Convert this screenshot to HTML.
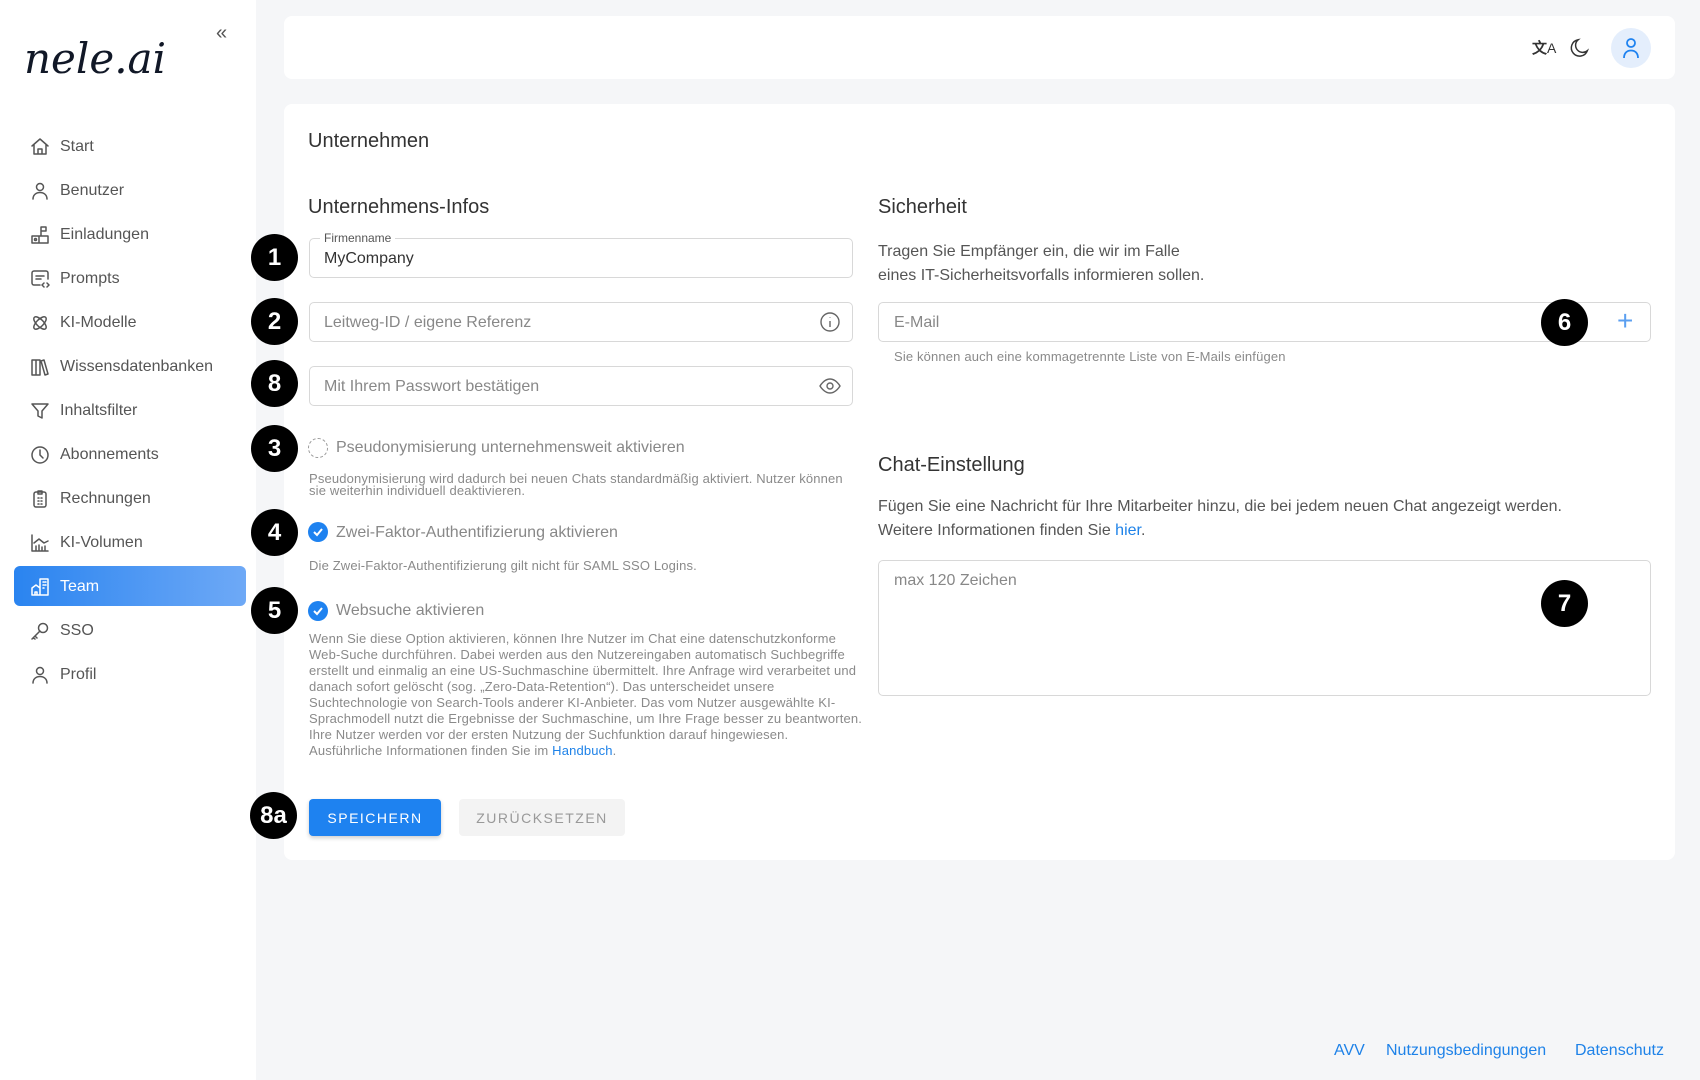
<!DOCTYPE html>
<html><head><meta charset="utf-8"><style>
*{box-sizing:border-box;margin:0;padding:0}
body{width:1700px;height:1080px;background:#f5f6f8;font-family:"Liberation Sans",sans-serif;color:#333;position:relative;overflow:hidden}
.a{position:absolute}
.side{left:0;top:0;width:256px;height:1080px;background:#fff}
.nav{left:14px;width:232px;height:40px;border-radius:6px;display:flex;align-items:center;font-size:16px;color:#555}
.nav svg{position:absolute;left:16px;top:11px;width:20px;height:20px;fill:none;stroke:#555;stroke-width:1.5;stroke-linecap:round;stroke-linejoin:round}
.nav span{position:absolute;left:46px;top:12px}
.card{background:#fff;border-radius:8px}
.badge{width:47px;height:47px;border-radius:50%;background:#000;color:#fff;font-size:24px;font-weight:bold;display:flex;align-items:center;justify-content:center;margin-left:-23px;margin-top:-23px}
.field{border:1.5px solid #d8d8d8;border-radius:5px;background:#fff}
.ph{font-size:16px;color:#888}
.h2{font-size:20px;color:#333}
.desc{font-size:13px;letter-spacing:.15px;color:#8a8a8a;line-height:12px;white-space:nowrap}
.chk{width:20px;height:20px;border-radius:50%;background:#1e82f0;margin-top:-10px}
.chk svg{position:absolute;left:4px;top:5px}
.lbl{font-size:16px;color:#888;margin-top:-10px}
.lnk{color:#1e82e8}
</style></head><body>
<div class="a side"></div>
<div class="a" style="left:24px;top:34px;font-family:'DejaVu Serif',serif;font-style:italic;font-size:42px;color:#111827;letter-spacing:0px">nele.ai</div>
<div class="a" style="left:216px;top:22px;font-size:20px;color:#555">«</div>

<div class="a nav" style="top:126px"><svg viewBox="0 0 20 20"><path d="M2 9L10 2l8 7M4 8v9h12V8M8 17v-5h4v5"/></svg><span>Start</span></div>
<div class="a nav" style="top:170px"><svg viewBox="0 0 20 20"><circle cx="10" cy="6" r="3.5"/><path d="M3 18c0-4 3-6.5 7-6.5s7 2.5 7 6.5"/></svg><span>Benutzer</span></div>
<div class="a nav" style="top:214px"><svg viewBox="0 0 20 20"><path d="M2 18V11h7v7zM9 11h9v7H9M11 11V2h5v4h-5"/><circle cx="5.5" cy="14.5" r="1"/></svg><span>Einladungen</span></div>
<div class="a nav" style="top:258px"><svg viewBox="0 0 20 20"><path d="M10 16H4a2 2 0 0 1-2-2V4a2 2 0 0 1 2-2h12a2 2 0 0 1 2 2v6M6 7h8M6 10h5M14 14l-2 2 2 2M17 14l2 2-2 2"/></svg><span>Prompts</span></div>
<div class="a nav" style="top:302px"><svg viewBox="0 0 20 20"><ellipse cx="10" cy="10" rx="8" ry="3.5" transform="rotate(45 10 10)"/><ellipse cx="10" cy="10" rx="8" ry="3.5" transform="rotate(-45 10 10)"/></svg><span>KI-Modelle</span></div>
<div class="a nav" style="top:346px"><svg viewBox="0 0 20 20"><path d="M2 3h4v15H2zM6 3h4v15H6zM11 4l3-1 4 14-3 1z"/></svg><span>Wissensdatenbanken</span></div>
<div class="a nav" style="top:390px"><svg viewBox="0 0 20 20"><path d="M2 3h16l-6 7v7l-4-2v-5z"/></svg><span>Inhaltsfilter</span></div>
<div class="a nav" style="top:434px"><svg viewBox="0 0 20 20"><circle cx="10" cy="10" r="8"/><path d="M10 5v5l3 3"/></svg><span>Abonnements</span></div>
<div class="a nav" style="top:478px"><svg viewBox="0 0 20 20"><rect x="4" y="3" width="12" height="15" rx="2"/><path d="M8 2h4v3H8zM8 9h1M11 9h1M8 12h1M11 12h1M8 15h1M11 15h1"/></svg><span>Rechnungen</span></div>
<div class="a nav" style="top:522px"><svg viewBox="0 0 20 20"><path d="M2 2v16h16M4 10l5-4 5 4 4-2M6 17v-4M9 17v-5M12 17v-3M15 17v-4"/></svg><span>KI-Volumen</span></div>
<div class="a nav" style="top:566px;background:linear-gradient(90deg,#2a84f0,#6ea9f6);color:#fff"><svg viewBox="0 0 20 20" style="stroke:#fff"><path d="M2 18v-7l4-3 4 3v7zM10 18V2h8v16zM5 18v-3h2v3M13 5h1M13 8h1M13 11h1M15 5h1M15 8h1"/></svg><span>Team</span></div>
<div class="a nav" style="top:610px"><svg viewBox="0 0 20 20"><circle cx="13" cy="7" r="4.5"/><path d="M10 10l-8 8M5 15l2 2M3 17l2 1"/></svg><span>SSO</span></div>
<div class="a nav" style="top:654px"><svg viewBox="0 0 20 20"><circle cx="10" cy="6" r="3.5"/><path d="M3 18c0-4 3-6.5 7-6.5s7 2.5 7 6.5"/></svg><span>Profil</span></div>

<div class="a card" style="left:284px;top:16px;width:1391px;height:63px"></div>
<div class="a" style="left:1532px;top:37px;font-size:15px;color:#333;font-weight:bold">文<span style="font-size:14px;font-weight:normal">A</span></div>
<svg class="a" style="left:1569px;top:37px" width="22" height="22" viewBox="0 0 24 24" fill="none" stroke="#333" stroke-width="1.6"><path d="M20 15A9 9 0 1 1 10 3a7 7 0 0 0 10 12z"/></svg>
<div class="a" style="left:1611px;top:28px;width:40px;height:40px;border-radius:50%;background:#e4eefc"></div>
<svg class="a" style="left:1621px;top:37px" width="20" height="22" viewBox="0 0 20 22" fill="none" stroke="#1e82f0" stroke-width="1.8"><circle cx="10" cy="6" r="4"/><path d="M3 21c0-5 3-7.5 7-7.5s7 2.5 7 7.5"/></svg>

<div class="a card" style="left:284px;top:104px;width:1391px;height:756px"></div>
<div class="a h2" style="left:308px;top:130px">Unternehmen</div>
<div class="a h2" style="left:308px;top:196px">Unternehmens-Infos</div>

<div class="a field" style="left:309px;top:238px;width:544px;height:40px"></div>
<div class="a" style="left:320px;top:231px;font-size:12px;color:#555;background:#fff;padding:0 4px">Firmenname</div>
<div class="a" style="left:324px;top:250px;font-size:16px;color:#333">MyCompany</div>

<div class="a field" style="left:309px;top:302px;width:544px;height:40px"></div>
<div class="a ph" style="left:324px;top:314px">Leitweg-ID / eigene Referenz</div>
<svg class="a" style="left:819px;top:311px" width="22" height="22" viewBox="0 0 22 22" fill="none" stroke="#666" stroke-width="1.4"><circle cx="11" cy="11" r="9"/><path d="M11 10v6M11 6.5v.5"/></svg>

<div class="a field" style="left:309px;top:366px;width:544px;height:40px"></div>
<div class="a ph" style="left:324px;top:378px">Mit Ihrem Passwort bestätigen</div>
<svg class="a" style="left:819px;top:377px" width="22" height="18" viewBox="0 0 22 18" fill="none" stroke="#666" stroke-width="1.4"><path d="M1 9s4-7 10-7 10 7 10 7-4 7-10 7S1 9 1 9z"/><circle cx="11" cy="9" r="3"/></svg>

<div class="a" style="left:308px;top:438px;width:20px;height:20px;border-radius:50%;border:1.5px dashed #999"></div>
<div class="a lbl" style="left:336px;top:449px">Pseudonymisierung unternehmensweit aktivieren</div>
<div class="a desc" style="left:309px;top:473px">Pseudonymisierung wird dadurch bei neuen Chats standardmäßig aktiviert. Nutzer können<br>sie weiterhin individuell deaktivieren.</div>

<div class="a chk" style="left:308px;top:532px"><svg width="12" height="10" viewBox="0 0 12 10" fill="none" stroke="#fff" stroke-width="2"><path d="M2 5l3 3 5-6"/></svg></div>
<div class="a lbl" style="left:336px;top:534px">Zwei-Faktor-Authentifizierung aktivieren</div>
<div class="a desc" style="left:309px;top:560px">Die Zwei-Faktor-Authentifizierung gilt nicht für SAML SSO Logins.</div>

<div class="a chk" style="left:308px;top:611px"><svg width="12" height="10" viewBox="0 0 12 10" fill="none" stroke="#fff" stroke-width="2"><path d="M2 5l3 3 5-6"/></svg></div>
<div class="a lbl" style="left:336px;top:612px">Websuche aktivieren</div>
<div class="a desc" style="left:309px;top:631px;line-height:16px">Wenn Sie diese Option aktivieren, können Ihre Nutzer im Chat eine datenschutzkonforme<br>Web-Suche durchführen. Dabei werden aus den Nutzereingaben automatisch Suchbegriffe<br>erstellt und einmalig an eine US-Suchmaschine übermittelt. Ihre Anfrage wird verarbeitet und<br>danach sofort gelöscht (sog. „Zero-Data-Retention“). Das unterscheidet unsere<br>Suchtechnologie von Search-Tools anderer KI-Anbieter. Das vom Nutzer ausgewählte KI-<br>Sprachmodell nutzt die Ergebnisse der Suchmaschine, um Ihre Frage besser zu beantworten.<br>Ihre Nutzer werden vor der ersten Nutzung der Suchfunktion darauf hingewiesen.<br>Ausführliche Informationen finden Sie im <span class="lnk">Handbuch</span>.</div>

<div class="a" style="left:309px;top:799px;width:132px;height:37px;background:#1e82f0;border-radius:4px;color:#fff;font-size:14px;letter-spacing:1.5px;display:flex;align-items:center;justify-content:center;box-shadow:0 2px 4px rgba(0,0,0,.2)">SPEICHERN</div>
<div class="a" style="left:459px;top:799px;width:166px;height:37px;background:#f3f3f3;border-radius:4px;color:#999;font-size:14px;letter-spacing:1.5px;display:flex;align-items:center;justify-content:center">ZURÜCKSETZEN</div>

<div class="a h2" style="left:878px;top:196px">Sicherheit</div>
<div class="a" style="left:878px;top:240px;font-size:16px;color:#555;line-height:24px">Tragen Sie Empfänger ein, die wir im Falle<br>eines IT-Sicherheitsvorfalls informieren sollen.</div>
<div class="a field" style="left:878px;top:302px;width:773px;height:40px"></div>
<div class="a ph" style="left:894px;top:314px">E-Mail</div>
<div class="a" style="left:1617px;top:305px;font-size:28px;color:#5b9ff0;font-weight:300">+</div>
<div class="a" style="left:894px;top:349px;font-size:13px;letter-spacing:.15px;color:#8a8a8a">Sie können auch eine kommagetrennte Liste von E-Mails einfügen</div>

<div class="a h2" style="left:878px;top:454px">Chat-Einstellung</div>
<div class="a" style="left:878px;top:495px;font-size:16px;color:#555;line-height:24px">Fügen Sie eine Nachricht für Ihre Mitarbeiter hinzu, die bei jedem neuen Chat angezeigt werden.<br>Weitere Informationen finden Sie <span class="lnk">hier</span>.</div>
<div class="a field" style="left:878px;top:560px;width:773px;height:136px"></div>
<div class="a ph" style="left:894px;top:572px">max 120 Zeichen</div>

<div class="a badge" style="left:274px;top:257px">1</div>
<div class="a badge" style="left:274px;top:321px">2</div>
<div class="a badge" style="left:274px;top:383px">8</div>
<div class="a badge" style="left:274px;top:448px">3</div>
<div class="a badge" style="left:274px;top:532px">4</div>
<div class="a badge" style="left:274px;top:610px">5</div>
<div class="a badge" style="left:273px;top:815px">8a</div>
<div class="a badge" style="left:1564px;top:322px">6</div>
<div class="a badge" style="left:1564px;top:603px">7</div>

<div class="a lnk" style="left:1334px;top:1042px;font-size:16px">AVV</div>
<div class="a lnk" style="left:1386px;top:1042px;font-size:16px">Nutzungsbedingungen</div>
<div class="a lnk" style="left:1575px;top:1042px;font-size:16px">Datenschutz</div>
</body></html>
